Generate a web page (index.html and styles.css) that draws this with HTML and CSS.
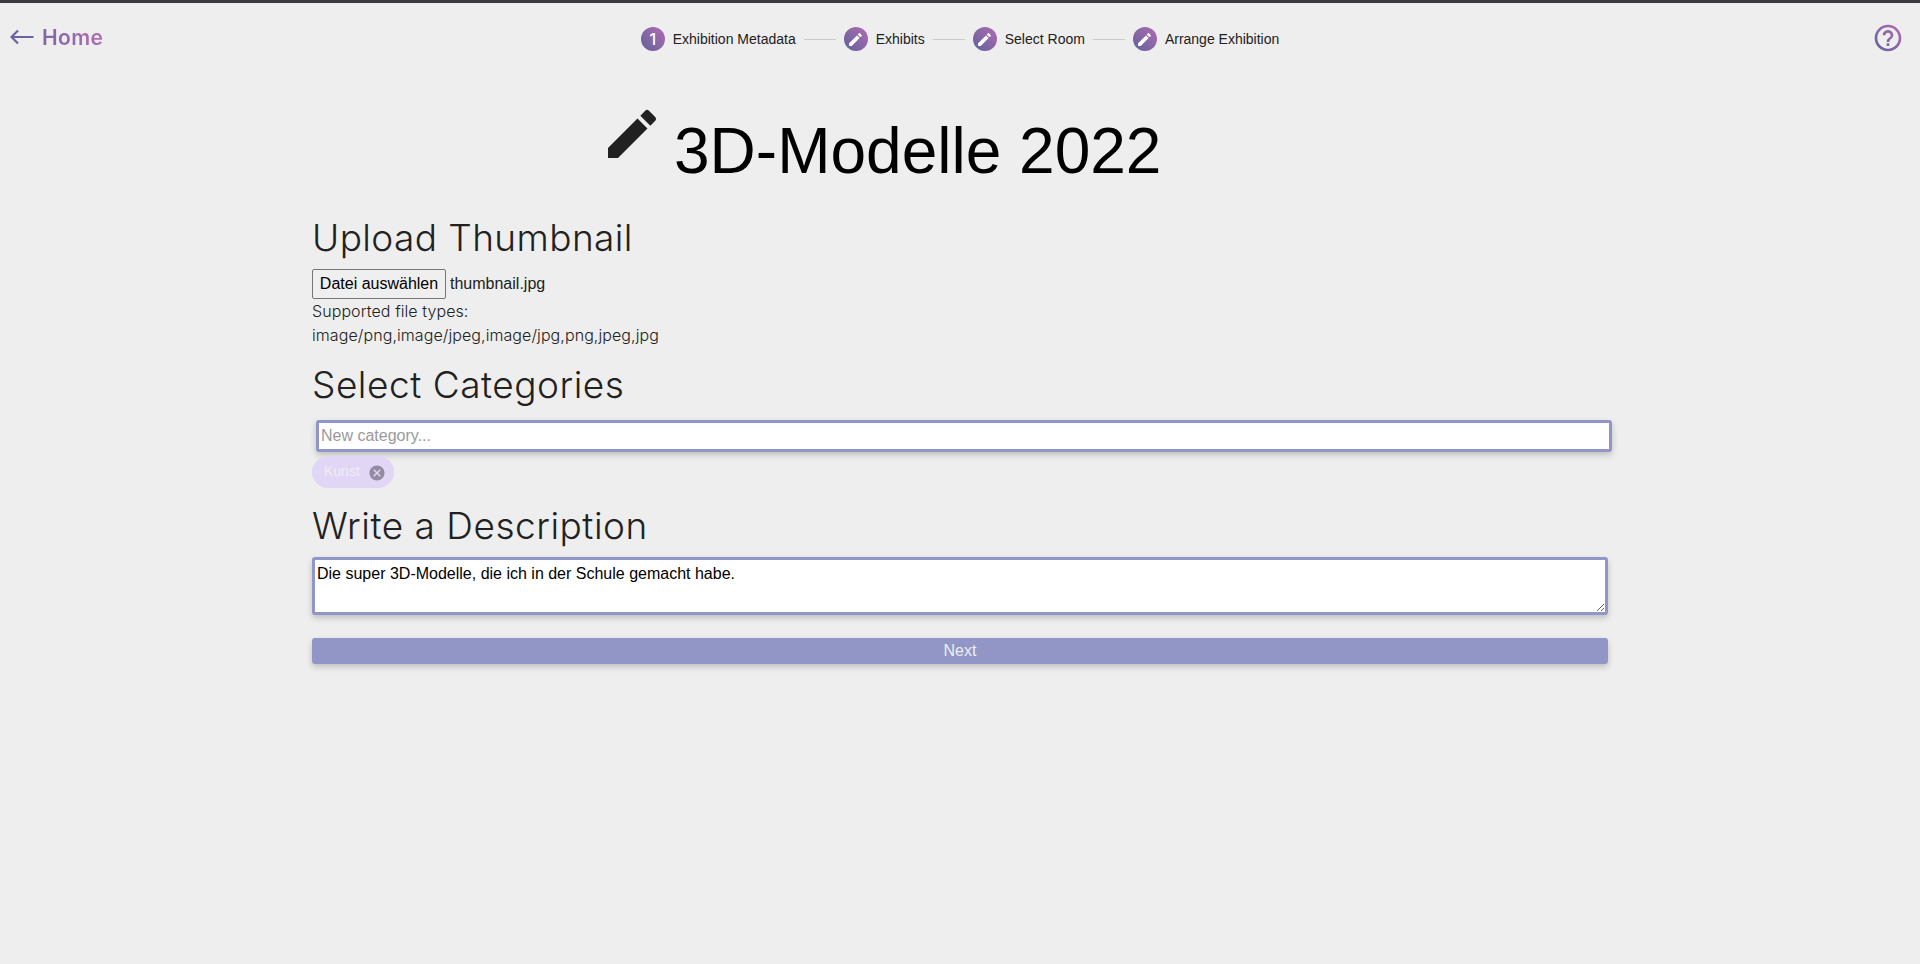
FILE: index.html
```html
<!DOCTYPE html>
<html lang="de">
<head>
<meta charset="utf-8">
<title>Exhibition Metadata</title>
<link rel="stylesheet" href="styles.css">
</head>
<body>
<svg class="defs" width="0" height="0" aria-hidden="true">
  <defs>
    <linearGradient id="accent" x1="0" y1="1" x2="1" y2="0"><stop offset="0" stop-color="#5e6399"/><stop offset="1" stop-color="#b36bb3"/></linearGradient>
    <symbol id="pencil" viewBox="0 0 24 24"><path d="M3 17.25V21h3.75L17.81 9.94l-3.75-3.75L3 17.25zM20.71 7.04c.39-.39.39-1.02 0-1.41l-2.34-2.34a.9959.9959 0 0 0-1.41 0l-1.83 1.83 3.75 3.75 1.83-1.83z"/></symbol>
  </defs>
</svg>
<header class="topbar">
  <a class="home">
    <svg class="home-arrow" viewBox="0 0 24 16"><path d="M23.5 8H2M8 1.5 1.5 8 8 14.5"/></svg>
    <span class="home-label">Home</span>
  </a>
  <nav class="stepper">
    <div class="step"><span class="badge">1</span><span>Exhibition Metadata</span></div>
    <i class="connector"></i>
    <div class="step"><span class="badge"><svg><use href="#pencil"/></svg></span><span>Exhibits</span></div>
    <i class="connector"></i>
    <div class="step"><span class="badge"><svg><use href="#pencil"/></svg></span><span>Select Room</span></div>
    <i class="connector"></i>
    <div class="step"><span class="badge"><svg><use href="#pencil"/></svg></span><span>Arrange Exhibition</span></div>
  </nav>
  <svg class="help" viewBox="0 0 24 24"><path fill="url(#accent)" d="M11 18h2v-2h-2v2zm1-16C6.48 2 2 6.48 2 12s4.48 10 10 10 10-4.48 10-10S17.52 2 12 2zm0 18c-4.41 0-8-3.59-8-8s3.59-8 8-8 8 3.59 8 8-3.59 8-8 8zm0-14c-2.21 0-4 1.79-4 4h2c0-1.1.9-2 2-2s2 .9 2 2c0 2-3 1.75-3 5h2c0-2.25 3-2.5 3-5 0-2.21-1.79-4-4-4z"/></svg>
</header>
<main class="content">
  <div class="title">
    <svg class="title-icon"><use href="#pencil"/></svg>
    <h1>3D-Modelle 2022</h1>
  </div>
  <section class="thumbnail">
    <h2 class="h-upload">Upload Thumbnail</h2>
    <div class="file"><button class="choose">Datei auswählen</button><span>thumbnail.jpg</span></div>
    <p>Supported file types:<br>image/png,image/jpeg,image/jpg,png,jpeg,jpg</p>
  </section>
  <section class="categories">
    <h2>Select Categories</h2>
    <input class="field category-input" placeholder="New category...">
    <div class="chip"><span>Kunst</span><svg viewBox="0 0 24 24"><path d="M12 2C6.47 2 2 6.47 2 12s4.47 10 10 10 10-4.47 10-10S17.53 2 12 2zm5 13.59L15.59 17 12 13.41 8.41 17 7 15.59 10.59 12 7 8.41 8.41 7 12 10.59 15.59 7 17 8.41 13.41 12 17 15.59z"/></svg></div>
  </section>
  <section class="description">
    <h2>Write a Description</h2>
    <textarea class="field">Die super 3D-Modelle, die ich in der Schule gemacht habe.</textarea>
  </section>
  <button class="next">Next</button>
</main>
</body>
</html>
```

FILE: styles.css
```css
* { box-sizing: border-box; }
body {
  margin: 0;
  height: 964px;
  border-top: 3px solid #3b3a3f;
  background: #eee;
  color: #212121;
  font-family: "Liberation Sans", Arial, sans-serif;
  overflow: hidden;
}
.defs { position: absolute; }
h1, h2, p { margin: 0; font-weight: 400; }
.topbar {
  display: grid;
  grid-template-columns: 1fr auto 1fr;
  align-items: center;
  height: 72px;
  padding: 0 16px 0 10px;
}
.home {
  display: flex;
  align-items: center;
  gap: 8px;
  margin-top: -3px;
}
.home-arrow {
  width: 24px;
  height: 16px;
  margin-top: -1px;
  fill: none;
  stroke: #6b63a0;
  stroke-width: 2.2;
}
.home-label {
  background: linear-gradient(90deg, #7d66a5, #b06db3);
  background-clip: text;
  -webkit-background-clip: text;
  color: transparent;
  font: 600 21px/24px Inter, sans-serif;
  letter-spacing: .4px;
}
.stepper {
  display: flex;
  align-items: center;
  margin-left: 6px;
  font-size: 14px;
  color: #212121;
}
.step { display: flex; align-items: center; gap: 8px; white-space: nowrap; }
.connector { width: 32px; height: 1px; margin: 1px 8px 0; background: #cbcbcb; }
.badge {
  display: flex;
  align-items: center;
  justify-content: center;
  width: 24px;
  height: 24px;
  border-radius: 50%;
  background: linear-gradient(45deg, #5e6399, #b36bb3);
  color: #fff;
  font: 500 16px/24px Inter, sans-serif;
}
.badge svg { width: 17px; height: 17px; fill: #fff; }
.help { justify-self: end; width: 32px; height: 32px; margin-top: -2px; }
.content { width: 1296px; margin: 0 auto; display: flex; flex-direction: column; }
.title { display: flex; margin: 27px 0 0 288px; gap: 10px; }
.title-icon { width: 64px; height: 64px; fill: #212121; }
.title h1 { padding-top: 11px; color: #000; font-size: 64px; line-height: 76px; }
h2 { font: 300 37px/48px Inter, sans-serif; letter-spacing: .52px; }
.h-upload { letter-spacing: .4px; }
.thumbnail { margin-top: 25px; }
.file { display: flex; align-items: center; gap: 4px; margin-top: 7px; }
.choose {
  width: 134px;
  height: 30px;
  padding: 0;
  border: 1px solid #767676;
  border-radius: 2px;
  background: #efefef;
  color: #000;
  font: 16px "Liberation Sans", Arial, sans-serif;
}
.thumbnail p { font: 300 16px/24px Inter, sans-serif; letter-spacing: .08px; }
.categories { margin-top: 14px; }
.field {
  display: block;
  width: 1296px;
  border: 3px solid #9196c6;
  border-radius: 3px;
  outline: none;
  background: #fff;
  box-shadow: 0 3px 6px rgba(0, 0, 0, .2);
  color: #000;
  font: 16px "Liberation Sans", Arial, sans-serif;
}
.category-input { height: 32px; margin: 11px 0 0 4px; padding: 0 2px; }
.category-input::placeholder { color: #9a9a9a; }
.chip {
  display: flex;
  align-items: center;
  gap: 8px;
  width: 82px;
  height: 32px;
  margin-top: 4px;
  padding-left: 12px;
  border-radius: 16px;
  background: #e1d6f6;
  color: #f0eef2;
  font-size: 14px;
}
.chip span { margin-top: -2px; }
.chip svg { width: 18px; height: 18px; fill: #948ba3; margin-top: 1px; }
.description { margin-top: 14px; }
textarea.field { height: 58px; margin-top: 7px; padding: 5px 2px; resize: both; }
.next {
  height: 26px;
  margin-top: 23px;
  border: 0;
  border-radius: 3px;
  background: #9196c6;
  box-shadow: 0 3px 6px rgba(0, 0, 0, .2);
  color: #eee;
  font: 16px "Liberation Sans", Arial, sans-serif;
}
```
